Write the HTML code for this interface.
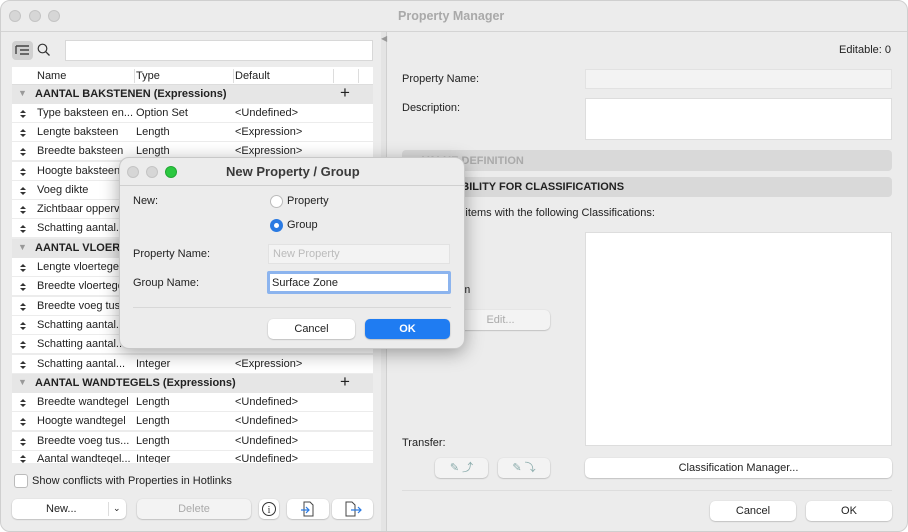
<!DOCTYPE html>
<html><head><meta charset="utf-8"><style>
*{box-sizing:border-box;margin:0;padding:0}
body{width:908px;height:532px;overflow:hidden;background:#fff;font-family:"Liberation Sans",sans-serif;font-size:11px;color:#222;position:relative}
.abs{position:absolute}
.win{left:0;top:0;width:908px;height:532px;background:#ececec;border-radius:10px;overflow:hidden;border:1px solid #cfcfcf}
.dot{width:12px;height:12px;border-radius:50%;background:#d6d6d6;border:1px solid #c4c4c4;position:absolute}
.row{position:absolute;left:11px;width:361px;height:19px;background:#fff;border-bottom:1px solid #ececec}
.row span{position:absolute;top:3px;white-space:nowrap}
.row i{position:absolute;left:8px;top:6px;width:6px;height:8px;background:linear-gradient(#fff,#fff)}
.row i:before{content:"";position:absolute;left:0;top:0;border-left:3px solid transparent;border-right:3px solid transparent;border-bottom:3px solid #333}
.row i:after{content:"";position:absolute;left:0;top:5px;border-left:3px solid transparent;border-right:3px solid transparent;border-top:3px solid #333}
.grp{position:absolute;left:11px;width:361px;height:19px;background:#e6e6e6;font-weight:bold}
.btn{position:absolute;background:#fff;border-radius:5px;box-shadow:0 0.5px 1.5px rgba(0,0,0,.3);text-align:center;line-height:20px;height:20px}
.lbl{position:absolute;white-space:nowrap}
</style></head><body>
<div class="abs win">
<div class="dot" style="left:8px;top:9px"></div><div class="dot" style="left:28px;top:9px"></div><div class="dot" style="left:47px;top:9px"></div>
<div class="lbl" style="left:397px;top:8px;font-size:12.5px;font-weight:bold;color:#a9a9a9">Property Manager</div>
<div class="abs" style="left:0;top:30px;width:908px;height:1px;background:#d4d4d4"></div>
<div class="abs" style="left:11px;top:40px;width:21px;height:19px;background:#d0d0d0;border-radius:4px"></div>
<svg class="abs" style="left:13px;top:42px" width="18" height="15"><g stroke="#444" stroke-width="1.4"><line x1="2" y1="3" x2="15" y2="3"/><line x1="6" y1="7" x2="15" y2="7"/><line x1="6" y1="11" x2="15" y2="11"/><line x1="2" y1="3" x2="2" y2="11"/></g></svg>
<svg class="abs" style="left:36px;top:42px" width="14" height="14"><circle cx="5.5" cy="5.5" r="4.3" fill="none" stroke="#333" stroke-width="1.2"/><line x1="8.6" y1="8.6" x2="12.5" y2="12.5" stroke="#333" stroke-width="1.3"/></svg>
<div class="abs" style="left:64px;top:39px;width:308px;height:21px;background:#fff;border:1px solid #d8d8d8"></div>
<div class="abs" style="left:11px;top:66px;width:361px;height:18px;background:#fff;border-bottom:1px solid #ddd"></div>
<div class="lbl" style="left:36px;top:69px">Name</div><div class="lbl" style="left:135px;top:69px">Type</div><div class="lbl" style="left:234px;top:69px">Default</div>
<div class="abs" style="left:133px;top:68px;width:1px;height:14px;background:#ddd"></div><div class="abs" style="left:232px;top:68px;width:1px;height:14px;background:#ddd"></div><div class="abs" style="left:332px;top:68px;width:1px;height:14px;background:#ddd"></div><div class="abs" style="left:357px;top:68px;width:1px;height:14px;background:#ddd"></div>

<div class="grp" style="top:84px"><span class="lbl" style="left:6px;top:3px;color:#999;font-size:9px">▼</span><span class="lbl" style="left:23px;top:3px">AANTAL BAKSTENEN (Expressions)</span><span class="lbl" style="left:328px;top:-2px;font-size:17px;font-weight:normal">+</span></div>
<div class="row" style="top:103px"><i></i><span style="left:25px">Type baksteen en...</span><span style="left:124px">Option Set</span><span style="left:223px">&lt;Undefined&gt;</span></div>
<div class="row" style="top:122px"><i></i><span style="left:25px">Lengte baksteen</span><span style="left:124px">Length</span><span style="left:223px">&lt;Expression&gt;</span></div>
<div class="row" style="top:141px"><i></i><span style="left:25px">Breedte baksteen</span><span style="left:124px">Length</span><span style="left:223px">&lt;Expression&gt;</span></div>
<div class="row" style="top:161px"><i></i><span style="left:25px">Hoogte baksteen</span></div>
<div class="row" style="top:180px"><i></i><span style="left:25px">Voeg dikte</span></div>
<div class="row" style="top:199px"><i></i><span style="left:25px">Zichtbaar oppervlak</span></div>
<div class="row" style="top:218px"><i></i><span style="left:25px">Schatting aantal...</span></div>
<div class="grp" style="top:238px"><span class="lbl" style="left:6px;top:3px;color:#999;font-size:9px">▼</span><span class="lbl" style="left:23px;top:3px">AANTAL VLOERTEGELS</span></div>
<div class="row" style="top:257px"><i></i><span style="left:25px">Lengte vloertegel</span></div>
<div class="row" style="top:276px"><i></i><span style="left:25px">Breedte vloertegel</span></div>
<div class="row" style="top:296px"><i></i><span style="left:25px">Breedte voeg tus...</span></div>
<div class="row" style="top:315px"><i></i><span style="left:25px">Schatting aantal...</span></div>
<div class="row" style="top:334px"><i></i><span style="left:25px">Schatting aantal...</span></div>
<div class="row" style="top:354px"><i></i><span style="left:25px">Schatting aantal...</span><span style="left:124px">Integer</span><span style="left:223px">&lt;Expression&gt;</span></div>
<div class="grp" style="top:373px"><span class="lbl" style="left:6px;top:3px;color:#999;font-size:9px">▼</span><span class="lbl" style="left:23px;top:3px">AANTAL WANDTEGELS (Expressions)</span><span class="lbl" style="left:328px;top:-2px;font-size:17px;font-weight:normal">+</span></div>
<div class="row" style="top:392px"><i></i><span style="left:25px">Breedte wandtegel</span><span style="left:124px">Length</span><span style="left:223px">&lt;Undefined&gt;</span></div>
<div class="row" style="top:411px"><i></i><span style="left:25px">Hoogte wandtegel</span><span style="left:124px">Length</span><span style="left:223px">&lt;Undefined&gt;</span></div>
<div class="row" style="top:431px"><i></i><span style="left:25px">Breedte voeg tus...</span><span style="left:124px">Length</span><span style="left:223px">&lt;Undefined&gt;</span></div>
<div class="row" style="top:450px;height:13px;overflow:hidden"><i style="top:4px"></i><span style="left:25px;top:2px">Aantal wandtegel...</span><span style="left:124px;top:2px">Integer</span><span style="left:223px;top:2px">&lt;Undefined&gt;</span></div>
<div class="abs" style="left:13px;top:473px;width:14px;height:14px;background:#fff;border:1px solid #bbb;border-radius:3px"></div>
<div class="lbl" style="left:31px;top:474px">Show conflicts with Properties in Hotlinks</div>
<div class="btn" style="left:11px;top:498px;width:114px"><span class="lbl" style="left:34px;top:0">New...</span><div class="abs" style="left:96px;top:3px;width:1px;height:14px;background:#ddd"></div><span class="lbl" style="left:101px;top:-1px;font-size:9px">⌄</span></div>
<div class="btn" style="left:136px;top:498px;width:114px;background:#f3f3f3;color:#aaa">Delete</div>
<div class="btn" style="left:258px;top:498px;width:20px"><svg width="16" height="16" style="margin-top:2px"><circle cx="8" cy="8" r="6.5" fill="none" stroke="#333"/><text x="8" y="12" font-size="10" text-anchor="middle" font-family="Liberation Serif" fill="#333">i</text></svg></div>
<div class="btn" style="left:286px;top:498px;width:42px"><svg width="16" height="18" style="margin-top:1px"><path d="M4 2h6l3 3v11H4z" fill="none" stroke="#444"/><path d="M1 10h8m-3-3 3 3-3 3" fill="none" stroke="#2a7ae2" stroke-width="1.2"/></svg></div>
<div class="btn" style="left:331px;top:498px;width:41px"><svg width="18" height="18" style="margin-top:1px"><path d="M2 2h6l3 3v11H2z" fill="none" stroke="#444"/><path d="M7 10h10m-3-3 3 3-3 3" fill="none" stroke="#2a7ae2" stroke-width="1.2"/></svg></div>
<div class="abs" style="left:380px;top:31px;width:6px;height:501px;background:#e4e4e4;border-right:1px solid #d0d0d0"></div>
<div class="lbl" style="left:380px;top:33px;font-size:8px;color:#999">◀</div>
<div class="lbl" style="left:838px;top:43px">Editable: 0</div>
<div class="lbl" style="left:401px;top:72px">Property Name:</div>
<div class="abs" style="left:584px;top:68px;width:307px;height:20px;background:#f3f3f3;border:1px solid #e2e2e2"></div>
<div class="lbl" style="left:401px;top:101px">Description:</div>
<div class="abs" style="left:584px;top:97px;width:307px;height:42px;background:#fff;border:1px solid #ddd"></div>
<div class="abs" style="left:401px;top:149px;width:490px;height:21px;background:#d9d9d9;border-radius:4px"><span class="lbl" style="left:20px;top:5px;font-weight:bold;color:#aaa">VALUE DEFINITION</span></div>
<div class="abs" style="left:401px;top:176px;width:490px;height:20px;background:#d9d9d9;border-radius:4px"><span class="lbl" style="left:20px;top:4px;font-weight:bold">AVAILABILITY FOR CLASSIFICATIONS</span></div>
<div class="lbl" style="left:401px;top:206px">Available for items with the following Classifications:</div>
<div class="abs" style="left:584px;top:231px;width:307px;height:214px;background:#fff;border:1px solid #ddd"></div>
<div class="lbl" style="left:380px;top:283px">Show or hide from</div>
<div class="btn" style="left:450px;top:309px;width:99px;background:#f3f3f3;color:#aaa">Edit...</div>
<div class="lbl" style="left:401px;top:436px">Transfer:</div>
<div class="btn" style="left:434px;top:457px;width:53px;background:#f3f3f3;color:#8aa">✎ ⤴</div>
<div class="btn" style="left:497px;top:457px;width:52px;background:#f3f3f3;color:#8aa">✎ ⤵</div>
<div class="btn" style="left:584px;top:457px;width:307px">Classification Manager...</div>
<div class="abs" style="left:401px;top:489px;width:490px;height:1px;background:#ddd"></div>
<div class="btn" style="left:709px;top:500px;width:86px">Cancel</div>
<div class="btn" style="left:805px;top:500px;width:86px">OK</div>
</div>
<div class="abs" style="left:119px;top:157px;width:346px;height:192px;background:#ececec;border-radius:10px;box-shadow:0 4px 18px rgba(0,0,0,.35);border:1px solid #c8c8c8">
<div class="dot" style="left:7px;top:8px"></div><div class="dot" style="left:26px;top:8px"></div><div class="dot" style="left:45px;top:8px;background:#2bc840;border-color:#22a834"></div>
<div class="lbl" style="left:106px;top:6px;font-size:13px;font-weight:bold;color:#3a3a3a">New Property / Group</div>
<div class="abs" style="left:0;top:27px;width:344px;height:1px;background:#d0d0d0"></div>
<div class="lbl" style="left:13px;top:37px">New:</div>
<div class="abs" style="left:150px;top:37px;width:13px;height:13px;border-radius:50%;background:#fff;border:1px solid #bbb"></div>
<div class="lbl" style="left:167px;top:37px">Property</div>
<div class="abs" style="left:150px;top:61px;width:13px;height:13px;border-radius:50%;background:#2a7ae2"><div class="abs" style="left:4px;top:4px;width:5px;height:5px;border-radius:50%;background:#fff"></div></div>
<div class="lbl" style="left:167px;top:61px">Group</div>
<div class="lbl" style="left:13px;top:90px">Property Name:</div>
<div class="abs" style="left:148px;top:86px;width:182px;height:20px;background:#f3f3f3;border:1px solid #e2e2e2"><span class="lbl" style="left:4px;top:3px;color:#bbb">New Property</span></div>
<div class="lbl" style="left:13px;top:119px">Group Name:</div>
<div class="abs" style="left:147px;top:113px;width:184px;height:23px;background:#fff;border:3px solid #8cb4ee;border-radius:2px"><span class="lbl" style="left:2px;top:3px">Surface Zone</span></div>
<div class="abs" style="left:13px;top:149px;width:318px;height:1px;background:#d8d8d8"></div>
<div class="btn" style="left:148px;top:161px;width:87px">Cancel</div>
<div class="btn" style="left:245px;top:161px;width:85px;background:#1f7cf2;color:#fff;font-weight:bold">OK</div>
</div>
</body></html>
